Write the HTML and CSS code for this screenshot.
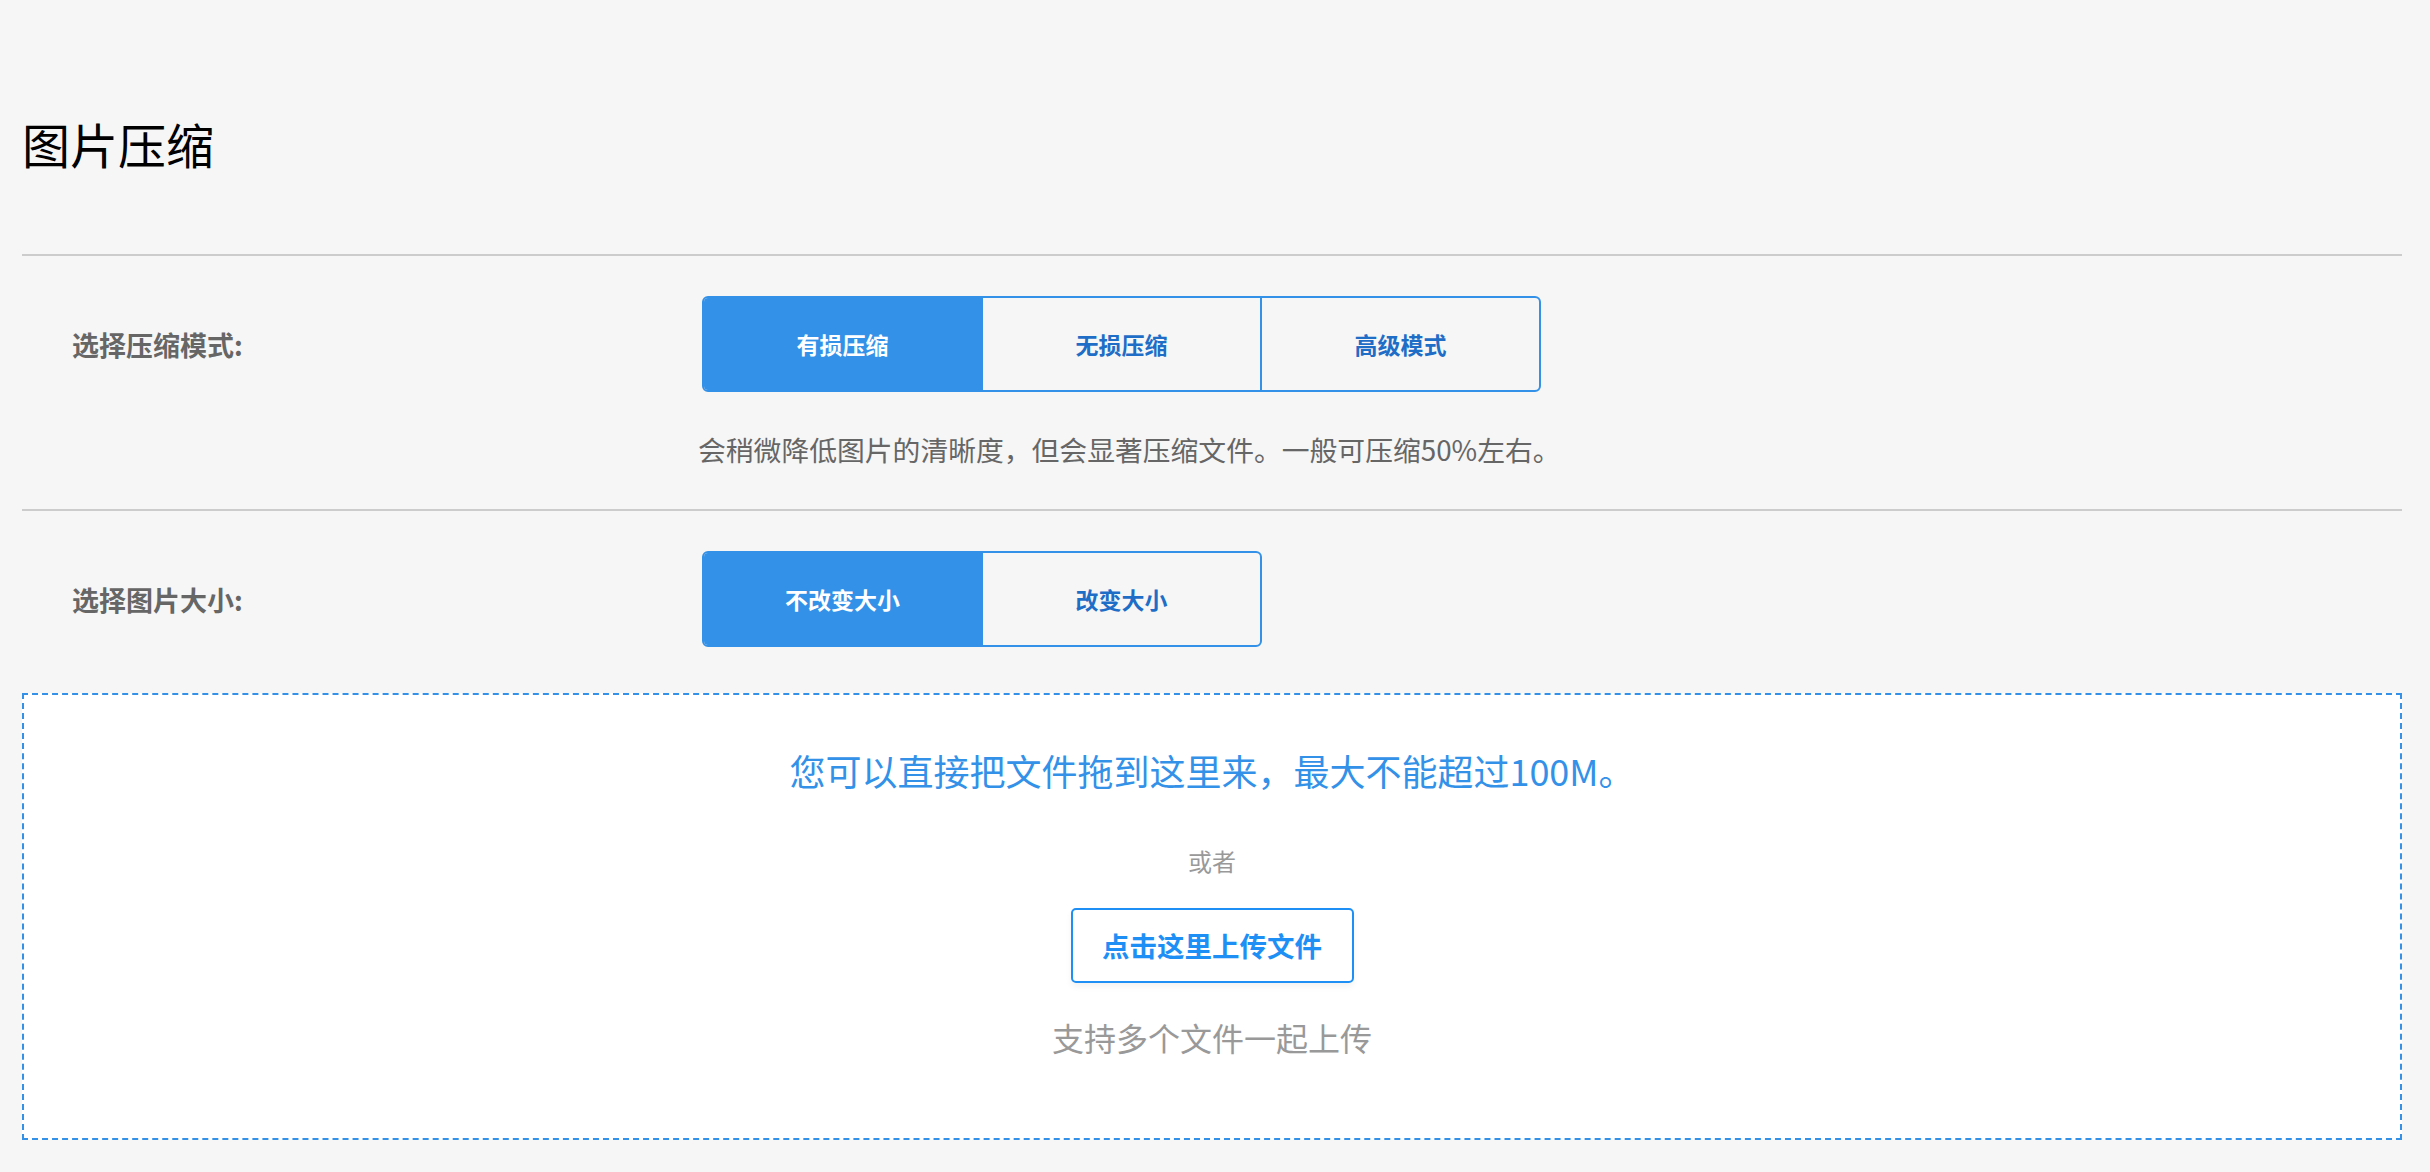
FILE: index.html
```html
<!DOCTYPE html>
<html lang="zh-CN">
<head>
<meta charset="utf-8">
<title>图片压缩</title>
<link rel="stylesheet" href="styles.css">
</head>
<body>
<div class="page">
  <h1 class="title">图片压缩</h1>
  <div class="rule"></div>
  <div class="row">
    <div class="label">选择压缩模式:</div>
    <div class="control">
      <div class="group">
        <div class="opt active">有损压缩</div>
        <div class="opt">无损压缩</div>
        <div class="opt">高级模式</div>
      </div>
      <div class="desc">会稍微降低图片的清晰度，但会显著压缩文件。一般可压缩50%左右。</div>
    </div>
  </div>
  <div class="rule"></div>
  <div class="row row-last">
    <div class="label">选择图片大小:</div>
    <div class="control">
      <div class="group">
        <div class="opt active">不改变大小</div>
        <div class="opt">改变大小</div>
      </div>
    </div>
  </div>
  <div class="drop">
    <div class="drop-title">您可以直接把文件拖到这里来，最大不能超过100M。</div>
    <div class="drop-or">或者</div>
    <div class="upload">点击这里上传文件</div>
    <div class="drop-note">支持多个文件一起上传</div>
  </div>
</div>
</body>
</html>
```
FILE: styles.css
```css
html, body {
  margin: 0;
  padding: 0;
  background: #f6f6f6;
}
body {
  font-family: "Noto Sans CJK SC", "Noto Sans", "Liberation Sans", sans-serif;
  color: #333;
}
.page {
  margin: 0 28px 0 22px;
  padding-top: 114px;
  height: 1058px;
}
.title {
  margin: 0 0 81px 0;
  font-size: 48px;
  line-height: 59px;
  font-weight: 400;
  color: #000;
}
.rule {
  border-top: 2px solid #cccccc;
}
.row {
  display: grid;
  grid-template-columns: 680px 1fr;
  padding: 40px 0 40px 0;
}
.row-last {
  padding-bottom: 46px;
}
.label {
  padding-left: 50px;
  height: 96px;
  line-height: 98px;
  font-size: 27px;
  font-weight: 700;
  color: #666;
}
.control {
  display: flex;
  flex-direction: column;
  align-items: flex-start;
}
.group {
  display: flex;
  border: 2px solid #3391e8;
  border-radius: 6px;
  overflow: hidden;
}
.opt {
  width: 277px;
  height: 92px;
  line-height: 92px;
  text-align: center;
  font-size: 23px;
  font-weight: 700;
  color: #1e6dc6;
}
.opt + .opt {
  border-left: 2px solid #3391e8;
}
.opt.active {
  background: #3391e8;
  color: #fff;
}
.desc {
  margin-top: 37px;
  margin-left: -4px;
  font-size: 27.8px;
  line-height: 40px;
  color: #666;
}
.drop {
  border: 2px dashed #3391e8;
  background: #fff;
  padding: 49px 0 79px;
  display: flex;
  flex-direction: column;
  align-items: center;
}
.drop-title {
  font-size: 36px;
  line-height: 52px;
  color: #3391e8;
}
.drop-or {
  margin-top: 48px;
  font-size: 24px;
  line-height: 34px;
  color: #999;
}
.upload {
  margin-top: 30px;
  box-sizing: border-box;
  width: 283px;
  height: 75px;
  line-height: 71px;
  text-align: center;
  border: 2px solid #1e8ff5;
  border-radius: 5px;
  background: #fff;
  box-shadow: 0 4px 6px rgba(0, 0, 0, 0.05);
  font-size: 27.5px;
  font-weight: 700;
  color: #1e8ff5;
}
.drop-note {
  margin-top: 32px;
  font-size: 32px;
  line-height: 44px;
  color: #999;
}
```
